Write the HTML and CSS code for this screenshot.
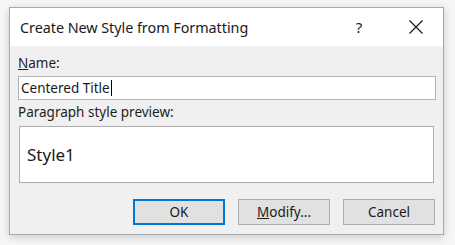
FILE: index.html
```html
<!DOCTYPE html>
<html>
<head>
<meta charset="utf-8">
<link rel="stylesheet" href="styles.css">
</head>
<body>
<div class="dialog">
  <div class="titlebar">
    <span class="title">Create New Style from Formatting</span>
    <span class="help">?</span>
    <span class="close">
      <svg width="14" height="14" viewBox="0 0 14 14"><path d="M0.5 0.5 L13.5 13.5 M13.5 0.5 L0.5 13.5" stroke="#111" stroke-width="1.1" fill="none"/></svg>
    </span>
  </div>
  <div class="body">
    <div class="label"><u>N</u>ame:</div>
    <div class="input"><span>Centered Title</span><span class="caret"></span></div>
    <div class="label label2">Paragraph style preview:</div>
    <div class="preview">Style1</div>
    <div class="buttons">
      <div class="btn default">OK</div>
      <div class="btn"><u>M</u>odify...</div>
      <div class="btn">Cancel</div>
    </div>
  </div>
</div>
</body>
</html>
```
FILE: styles.css
```css
html, body {
  margin: 0;
  padding: 0;
}
body {
  width: 455px;
  height: 245px;
  background: #f6f6f6;
  font-family: "Noto Sans", "Open Sans", sans-serif;
  color: #1a1a1a;
  padding: 7px 0 0 9px;
  box-sizing: border-box;
}
.dialog {
  width: 435px;
  height: 228px;
  box-sizing: border-box;
  border: 1px solid #a9a9a9;
  background: #f0f0f0;
  box-shadow: 0 2px 8px rgba(0,0,0,0.18);
  display: flex;
  flex-direction: column;
}
.titlebar {
  height: 38px;
  background: #ffffff;
  display: flex;
  align-items: center;
  padding-left: 10px;
  flex-shrink: 0;
}
.title {
  font-size: 14.4px;
  flex: 1;
  color: #1a1a1a;
  letter-spacing: -0.05px;
}
.help {
  font-size: 15px;
  width: 20px;
  margin-right: 40px;
  text-align: center;
}
.close {
  display: flex;
  margin-right: 20px;
}
.body {
  padding: 0 7px 0 8px;
  display: flex;
  flex-direction: column;
}
.label {
  font-size: 13.5px;
  line-height: 16px;
  margin-top: 9px;
  color: #1e1e1e;
}
.label2 {
  margin-top: 4px;
}
.input {
  margin-top: 5px;
  height: 24px;
  box-sizing: border-box;
  border: 1px solid #b4b4b4;
  background: #fff;
  font-size: 13.5px;
  display: flex;
  align-items: center;
  padding-left: 2px;
}
.caret {
  width: 1px;
  height: 16px;
  background: #000;
  margin-left: 1px;
}
.preview {
  margin: 6px 2px 0 1px;
  height: 57px;
  box-sizing: border-box;
  border: 1px solid #adadad;
  background: #fff;
  font-size: 17px;
  display: flex;
  align-items: center;
  padding-left: 7px;
}
.buttons {
  display: flex;
  justify-content: flex-end;
  gap: 13px;
  margin-top: 16px;
  margin-right: 1px;
}
.btn {
  width: 92px;
  height: 26px;
  box-sizing: border-box;
  border: 1px solid #adadad;
  background: #e1e1e1;
  font-size: 13.5px;
  display: flex;
  align-items: center;
  justify-content: center;
  color: #1a1a1a;
}
.btn.default {
  border: 2px solid #0078d7;
}
```
